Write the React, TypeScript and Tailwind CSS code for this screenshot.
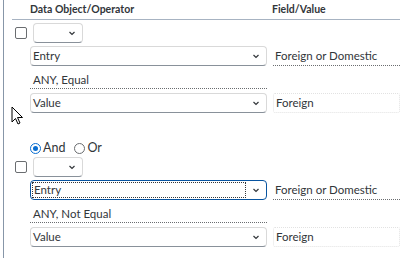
import React from "react";

const Chevron: React.FC = () => (
  <svg width="8" height="5" viewBox="0 0 8 5" className="shrink-0">
    <path d="M1.5 1l2.5 2.5 2.5-2.5" fill="none" stroke="#32363a" strokeWidth="1.2" />
  </svg>
);

const Select: React.FC<{ label?: string; wide?: boolean; focused?: boolean }> = ({
  label = "",
  wide = false,
  focused = false,
}) => (
  <div
    className={`flex h-[20px] items-center justify-between rounded-[4px] border bg-white pr-[6px] ${
      wide ? "w-[237px]" : "w-[50px]"
    } ${focused ? "border-[#0854a0]" : "border-[#d9d9d9] border-b-[#89919a]"}`}
  >
    <span
      className={`ml-[1px] flex h-[16px] flex-1 items-center pl-[1px] ${
        focused ? "mr-[6px] border border-dotted border-[#32363a]" : ""
      }`}
    >
      {label}
    </span>
    <Chevron />
  </div>
);

const Checkbox: React.FC = () => (
  <div className="flex w-[29px] justify-start pl-[11px]">
    <div className="h-[12px] w-[12px] rounded-[2px] border border-[#6a6d70] bg-white" />
  </div>
);

const FieldText: React.FC<{ text: string; dotted?: boolean }> = ({ text, dotted }) => (
  <div
    className={`ml-[6px] flex h-[20px] flex-1 items-center pl-[2px] ${
      dotted ? "border-b border-dotted border-[#6a6d70]" : "rounded-[2px] border border-dotted border-[#e2e2e2]"
    }`}
  >
    {text}
  </div>
);

const Condition: React.FC<{ op: string; value: string; focused?: boolean }> = ({ op, value, focused }) => (
  <div className="flex flex-col">
    <div className="flex items-center">
      <Checkbox />
      <Select />
    </div>
    <div className="mt-[3px] flex items-start pl-[26px]">
      <Select label="Entry" wide focused={focused} />
      <FieldText text="Foreign or Domestic" dotted />
    </div>
    <div className="ml-[26px] mt-[4px] flex h-[19px] w-[237px] items-center border-b border-dotted border-[#6a6d70] pl-[3px] pt-[2px]">
      {op}
    </div>
    <div className="mt-[4px] flex items-start pl-[26px]">
      <Select label="Value" wide />
      <FieldText text={value} />
    </div>
  </div>
);

const Radio: React.FC<{ checked?: boolean; label: string }> = ({ checked, label }) => (
  <div className="flex items-center">
    <div
      className={`flex h-[11px] w-[11px] items-center justify-center rounded-full border ${
        checked ? "border-[#0a6ed1]" : "border-[#6a6d70]"
      }`}
    >
      {checked && <div className="h-[5px] w-[5px] rounded-full bg-[#0a6ed1]" />}
    </div>
    <span className="ml-[2px]">{label}</span>
  </div>
);

export default function App() {
  return (
    <div
      className="relative h-[258px] w-[400px] overflow-hidden bg-white pl-[3px] text-[11.5px] text-[#32363a]"
      style={{ fontFamily: "Lato, Arial, sans-serif" }}
    >
      <div className="h-full border-l border-[#8796a8]">
        <div className="ml-[8px] flex h-[20px] items-center border-b border-[#a7b3c2] text-[10.5px] font-bold">
          <span className="ml-[18px] w-[242px]">Data Object/Operator</span>
          <span>Field/Value</span>
        </div>
        <div className="pt-[3px]">
          <Condition op="ANY, Equal" value="Foreign" />
        </div>
        <div className="mt-[28px] flex h-[14px] items-center gap-[9px] pl-[26px] text-[12.5px]">
          <Radio checked label="And" />
          <Radio label="Or" />
        </div>
        <div className="mt-[2px]">
          <Condition op="ANY, Not Equal" value="Foreign" focused />
        </div>
      </div>
      <svg className="absolute left-[11px] top-[106px]" width="12" height="19" viewBox="0 0 12 19">
        <path d="M1 1v15l3.5-3.5 2.5 5.5 2-1-2.5-5.5h5z" fill="#fff" stroke="#000" strokeWidth="1" />
      </svg>
    </div>
  );
}
